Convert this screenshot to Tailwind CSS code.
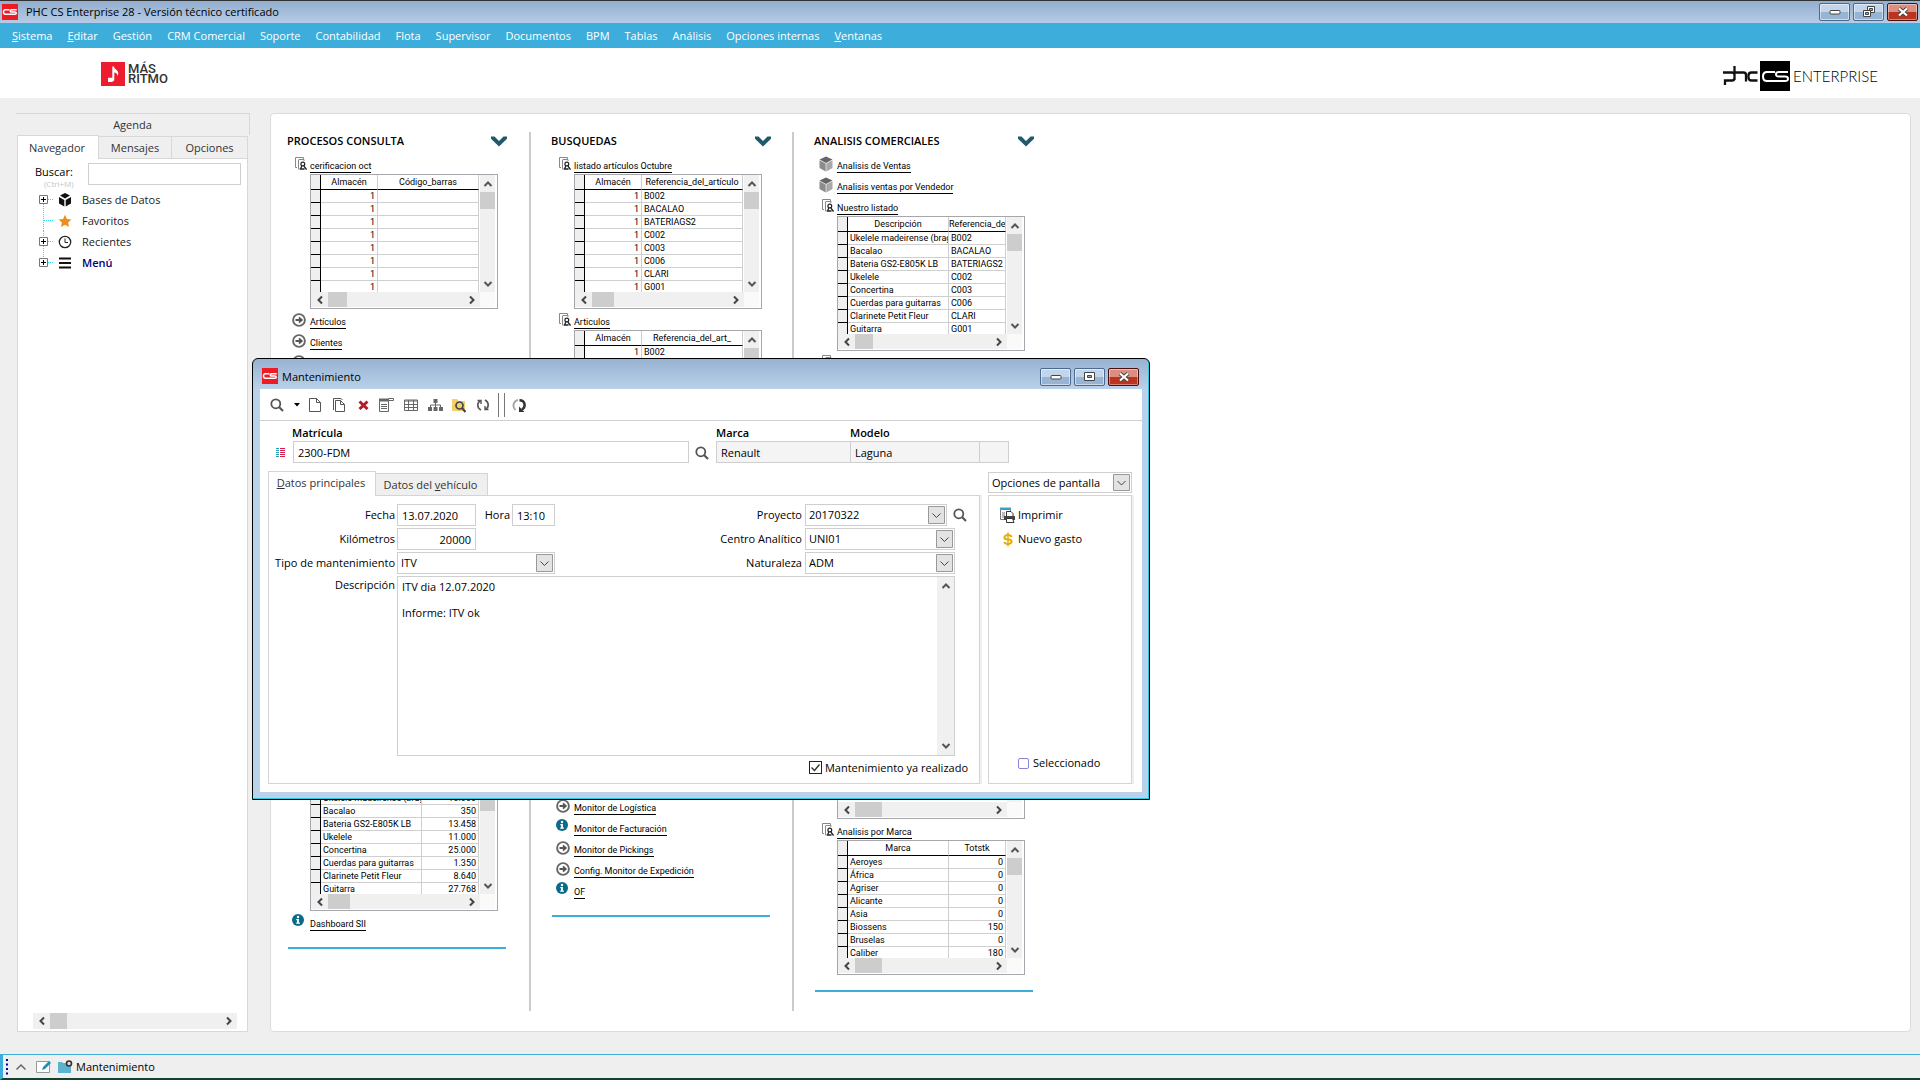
<!DOCTYPE html>
<html lang="es">
  <head>
    <meta charset="UTF-8" />
    <meta name="viewport" content="width=device-width, initial-scale=1.0" />
    <title>PHC CS Enterprise 28</title>
    <script src="https://cdn.jsdelivr.net/npm/@tailwindcss/browser@4"></script>
  </head>
  <body class="font-['Open_Sans','Noto_Sans',sans-serif] text-[11px] leading-4 text-black">
    <!-- Icon set -->
    <svg class="hidden">
      <symbol id="i-cs" viewBox="0 0 16 16">
        <rect width="16" height="16" fill="#ed1c24" />
        <path d="M7.5 5.8H3.2Q1.5 5.8 1.5 8t1.7 2.2h4.3M14.8 5.8H9.8Q8.3 5.8 8.3 7t1.5 1.1h3Q14.3 8.100 14.300 9.200t-1.500 1H6.500" fill="none" stroke="#fff" stroke-width="1.5" />
      </symbol>
      <symbol id="i-search" viewBox="0 0 14 14">
        <circle cx="5.800" cy="5.800" r="4.500" fill="none" stroke="#555" stroke-width="1.800" />
        <path d="M9 9l4 4" stroke="#555" stroke-width="2.200" />
      </symbol>
      <symbol id="i-up" viewBox="0 0 10 8">
        <path d="M1.500 6L5 2.500 8.500 6" fill="none" stroke="#555" stroke-width="2" />
      </symbol>
      <symbol id="i-down" viewBox="0 0 10 8">
        <path d="M1.500 2L5 5.500 8.500 2" fill="none" stroke="#555" stroke-width="2" />
      </symbol>
      <symbol id="i-left" viewBox="0 0 8 10">
        <path d="M6 1.500L2.500 5 6 8.500" fill="none" stroke="#444" stroke-width="2" />
      </symbol>
      <symbol id="i-right" viewBox="0 0 8 10">
        <path d="M2 1.500L5.500 5 2 8.500" fill="none" stroke="#444" stroke-width="2" />
      </symbol>
      <symbol id="i-chevron" viewBox="0 0 16 12">
        <path d="M0 1.500h3.500L8 6l4.500-4.500H16v2.300L8 11.500 0 3.800z" fill="#215968" />
      </symbol>
      <symbol id="i-list" viewBox="0 0 12 14">
        <path d="M8.500 2V.5h-8v10H2M3.500 3v9H5M3.500 2.500H9V4" fill="none" stroke="#888" />
        <circle cx="7.800" cy="7" r="1.900" fill="#fff" stroke="#222" stroke-width="1.200" />
        <path d="M5.500 12L6.800 9M5 12h4.500M8.800 8.800l2.700 3.700" fill="none" stroke="#222" stroke-width="1.300" />
      </symbol>
      <symbol id="i-go" viewBox="0 0 14 14">
        <circle cx="7" cy="7" r="5.900" fill="#fff" stroke="#666" stroke-width="1.900" />
        <path d="M3.500 7h6M7 4.300L9.800 7 7 9.700" fill="none" stroke="#555" stroke-width="1.800" />
      </symbol>
      <symbol id="i-info" viewBox="0 0 12 12">
        <circle cx="6" cy="6" r="6" fill="#0a6a8a" />
        <circle cx="6" cy="3" r="1.200" fill="#fff" />
        <path d="M4.300 5h2.600v3.600h1v1.200H4.200V8.600h.9V6.200h-.8z" fill="#fff" />
      </symbol>
      <symbol id="i-cube" viewBox="0 0 14 16">
        <path d="M7 .5L13.500 3.500 7 7 .5 3.500z" fill="#666" />
        <path d="M.5 4.300L6.700 7.600V15.500L.5 12z" fill="#8c8c8c" />
        <path d="M13.500 4.300L7.300 7.600V15.500L13.500 12z" fill="#a8a8a8" />
      </symbol>
    </svg>

    <div class="flex min-h-screen flex-col bg-[#efefef]">
      <!-- Title bar -->
      <header class="flex h-[23px] items-center border-t border-[#333] bg-linear-to-b from-[#92aecf] to-[#b6cce6] px-[2px]">
        <svg class="size-[16px]"><use href="#i-cs" /></svg>
        <h1 class="ml-2 flex-1">PHC CS Enterprise 28 - Versión técnico certificado</h1>
        <div class="flex gap-[3px]">
          <button aria-label="Minimizar" class="flex h-[18px] w-[31px] items-center justify-center rounded-[2px] border border-[#4a6a90] bg-linear-to-b from-[#c3d5ea] from-50% to-[#98b4d3] to-50% inset-ring inset-ring-white/50">
            <svg width="12" height="6"><rect x="1" y="1.500" width="10" height="3.500" rx="1" fill="#fff" stroke="#444" /></svg>
          </button>
          <button aria-label="Restaurar" class="flex h-[18px] w-[31px] items-center justify-center rounded-[2px] border border-[#4a6a90] bg-linear-to-b from-[#c3d5ea] from-50% to-[#98b4d3] to-50% inset-ring inset-ring-white/50">
            <svg width="12" height="12" fill="#fff" stroke="#444"><path d="M4.500.5h7v6h-7z" /><path d="M6.500 2.500h3v2h-3z" fill="#9ab" /><path d="M.5 4.500h7v6h-7z" /><path d="M2.500 6.500h3v2h-3z" fill="#9ab" /></svg>
          </button>
          <button aria-label="Cerrar" class="flex h-[18px] w-[31px] items-center justify-center rounded-[2px] border border-[#4a1010] bg-linear-to-b from-[#dc8f80] from-50% to-[#bb3420] to-50% inset-ring inset-ring-white/40">
            <svg width="12" height="10"><path d="M2 1.500l8 7M10 1.500l-8 7" stroke="#444" stroke-width="4" /><path d="M2 1.500l8 7M10 1.500l-8 7" stroke="#fff" stroke-width="2.200" /></svg>
          </button>
        </div>
      </header>

      <!-- Main menu -->
      <nav class="flex h-[25px] items-center gap-[15px] bg-[#3daedb] px-3 text-white">
        <a href="#"><u>S</u>istema</a>
        <a href="#"><u>E</u>ditar</a>
        <a href="#">Gestión</a>
        <a href="#">CRM Comercial</a>
        <a href="#">Soporte</a>
        <a href="#">Contabilidad</a>
        <a href="#">Flota</a>
        <a href="#">Supervisor</a>
        <a href="#">Documentos</a>
        <a href="#">BPM</a>
        <a href="#">Tablas</a>
        <a href="#">Análisis</a>
        <a href="#">Opciones internas</a>
        <a href="#"><u>V</u>entanas</a>
      </nav>

      <!-- Logos -->
      <div class="flex h-[50px] items-center justify-between bg-white pt-[2px] pr-[42px] pl-[101px]">
        <div class="flex items-center gap-[3px]">
          <svg width="24" height="24"><rect width="24" height="24" fill="#ed1c2e" /><path d="M11.300 4.500h1.600c.3 2.500 4 3.500 4.300 6.200.1 1.300-.2 2.200-.7 3-.1-2-1.600-3-3.200-3.300V17.500c0 1.600-1.300 2.500-3.300 2.500H7v-4.200h4.300z" fill="#fff" /></svg>
          <p class="font-['Roboto',sans-serif] text-[13px] leading-[10px] font-medium text-[#333]">MÁS<br />RITMO</p>
        </div>
        <div class="flex items-center gap-[2px] pt-[3px]">
          <svg width="68" height="30" fill="none">
            <path d="M0 11.500h9q2.500 0 2.500 2.500v3q0 2.500-2.500 2.500H2V24M11.500 5v14M12 11.500h8.500q2.500 0 2.500 2.500v6.500M34.500 11.500h-6q-3 0-3 3v2q0 3 3 3h6" stroke="#111" stroke-width="2.300" />
            <rect x="37" width="30" height="30" fill="#000" />
            <path d="M52 11h-8q-4 0-4 4.500t4 4.500h9M65 11H56q-3 0-3 2.300t3 2.200h6q3 0 3 2.300T62 20H50" stroke="#fff" stroke-width="2" />
          </svg>
          <span class="font-['Lato',sans-serif] text-[15px] font-light">ENTERPRISE</span>
        </div>
      </div>

      <main class="relative flex flex-1 gap-[20px] pt-[15px] pr-[9px] pb-[22px] pl-[16px]">
        <!-- Navigator -->
        <aside class="flex w-[234px] shrink-0 flex-col">
          <button class="h-[22px] border-t border-r border-[#d8d8d8] pt-px text-[#333]">Agenda</button>
          <div class="mr-[2px] ml-px flex items-end text-[#333]">
            <button class="relative z-10 -mb-px h-[24px] w-[82px] border border-b-0 border-[#d8d8d8] bg-white pr-[2px]">Navegador</button>
            <button class="h-[22px] w-[73px] border-t border-r border-[#d8d8d8]">Mensajes</button>
            <button class="h-[22px] flex-1 border-t border-r border-[#d8d8d8]">Opciones</button>
          </div>
          <div class="mr-[2px] ml-px flex flex-1 flex-col border border-[#d8d8d8] bg-white">
            <div class="flex pt-1 pr-[6px]">
              <label for="buscar" class="w-[70px] pt-px pl-[17px]">Buscar:<span class="block pl-[9px] text-[8px] leading-2 text-[#c4c4c4]">(Ctrl+M)</span></label>
              <input id="buscar" type="text" class="h-[22px] min-w-0 flex-1 border border-[#cfcfcf] bg-white px-1" />
            </div>
            <ul class="mt-px ml-[17px] font-medium text-[#222]">
              <li class="flex h-[21px] items-center">
                <svg width="21" height="21"><path d="M13 10.500h6M8.500 15v6" fill="none" stroke="#2adcf0" stroke-dasharray="1 1" /><path d="M4.500 6.500h8v8h-8z" fill="#fff" stroke="#777" /><path d="M6 10.500h5M8.500 8v5" stroke="#000" /></svg>
                <svg class="mx-[2px]" width="14" height="14"><path d="M7 0l5 2.500L7 5.500 2 2.500zM1 4l5.300 3v6.500L1 10.500zM13 4L7.700 7v6.500L13 10.500z" fill="#111" /></svg>
                <a href="#" class="ml-2">Bases de Datos</a>
              </li>
              <li class="flex h-[21px] items-center">
                <svg width="21" height="21"><path d="M8.500 0v21M9 10.500h10" fill="none" stroke="#2adcf0" stroke-dasharray="1 1" /></svg>
                <svg class="mx-[2px]" width="14" height="14"><path d="M7 .8l1.900 4.100 4.500.5-3.300 3.100.9 4.500-4-2.200L3 13l.9-4.500L.6 5.400l4.500-.5z" fill="#f08c1a" /></svg>
                <a href="#" class="ml-2">Favoritos</a>
              </li>
              <li class="flex h-[21px] items-center">
                <svg width="21" height="21"><path d="M13 10.500h6M8.500 0v6M8.500 15v6" fill="none" stroke="#2adcf0" stroke-dasharray="1 1" /><path d="M4.500 6.500h8v8h-8z" fill="#fff" stroke="#777" /><path d="M6 10.500h5M8.500 8v5" stroke="#000" /></svg>
                <svg class="mx-[2px]" width="14" height="14" fill="none" stroke="#222"><circle cx="7" cy="7" r="5.700" stroke-width="1.300" /><path d="M7 3.500V7.500h3" /></svg>
                <a href="#" class="ml-2">Recientes</a>
              </li>
              <li class="flex h-[21px] items-center">
                <svg width="21" height="21"><path d="M13 10.500h6M8.500 0v6" fill="none" stroke="#2adcf0" stroke-dasharray="1 1" /><path d="M4.500 6.500h8v8h-8z" fill="#fff" stroke="#777" /><path d="M6 10.500h5M8.500 8v5" stroke="#000" /></svg>
                <svg class="mx-[2px]" width="14" height="14"><path d="M1 2.500h12M1 7h12M1 11.500h12" stroke="#111" stroke-width="2" /></svg>
                <a href="#" class="ml-2 font-semibold text-[#000080]">Menú</a>
              </li>
            </ul>
            <div class="mt-auto mr-[10px] mb-[2px] ml-[15px] flex h-[16px] items-center bg-[#f0f0f0]">
              <button aria-label="Izquierda" class="flex w-[17px] justify-center"><svg class="h-[10px] w-[8px]"><use href="#i-left" /></svg></button>
              <span class="h-full w-[17px] bg-[#cdcdcd]"></span>
              <button aria-label="Derecha" class="ml-auto flex w-[17px] justify-center"><svg class="h-[10px] w-[8px]"><use href="#i-right" /></svg></button>
            </div>
          </div>
        </aside>

        <!-- Dashboard columns, filled by the script below -->
        <div id="board" class="flex flex-1 rounded-sm border border-[#dcdcdc] bg-white pt-[18px] pb-5"></div>
      </main>

      <!-- Window list -->
      <footer class="flex h-[26px] items-center border-t border-b-2 border-l-[3px] border-t-[#3daedb] border-b-[#16402e] border-l-[#3daedb] pl-[3px]">
        <svg width="3" height="16"><path d="M1 0v16" stroke="#0000a8" stroke-width="2" stroke-dasharray="2 2.500" /></svg>
        <button aria-label="Expandir" class="ml-[6px]"><svg width="12" height="8"><path d="M1.500 6.500L6 2l4.500 4.500" fill="none" stroke="#666" stroke-width="1.500" /></svg></button>
        <button aria-label="Editar" class="ml-[9px]"><svg width="16" height="14"><path d="M.5 1.500h13v11H.5z" fill="#fff" stroke="#999" /><path d="M6 10l1-3 6-6 2 2-6 6z" fill="#1f93b0" /></svg></button>
        <button class="ml-[6px] flex items-center gap-[2px]">
          <svg width="16" height="14"><path d="M0 2h4l1 1h8v10H0z" fill="#5cb3d0" /><circle cx="11" cy="3.500" r="2.500" fill="#ddd" stroke="#333" stroke-width="1.600" /></svg>
          Mantenimiento
        </button>
      </footer>
    </div>

    <!-- Maintenance window -->
    <section class="absolute top-[358px] left-[252px] w-[898px] rounded-t-md border border-black bg-[#b9d1ea] bg-linear-to-b from-[#98b2d1] to-[#b9d1ea] to-[30px] px-[7px] pb-[7px] shadow-[inset_-1px_-1px_0_#2bc8e0]">
      <header class="flex h-[30px] items-start pt-[9px]">
        <svg class="ml-[2px] size-[16px]"><use href="#i-cs" /></svg>
        <h2 class="ml-1 flex-1 pt-px">Mantenimiento</h2>
        <div class="mr-[3px] flex gap-[3px]">
          <button aria-label="Minimizar" class="flex h-[18px] w-[31px] items-center justify-center rounded-[2px] border border-[#4a6a90] bg-linear-to-b from-[#c3d5ea] from-50% to-[#98b4d3] to-50% inset-ring inset-ring-white/50">
            <svg width="12" height="6"><rect x="1" y="1.500" width="10" height="3.500" rx="1" fill="#fff" stroke="#444" /></svg>
          </button>
          <button aria-label="Maximizar" class="flex h-[18px] w-[31px] items-center justify-center rounded-[2px] border border-[#4a6a90] bg-linear-to-b from-[#c3d5ea] from-50% to-[#98b4d3] to-50% inset-ring inset-ring-white/50">
            <svg width="12" height="10" fill="#fff" stroke="#444"><path d="M.5.5h10v8H.5z" /><path d="M3.500 3.500h4v2h-4z" fill="#9ab" /></svg>
          </button>
          <button aria-label="Cerrar" class="flex h-[18px] w-[31px] items-center justify-center rounded-[2px] border border-[#4a1010] bg-linear-to-b from-[#dc8f80] from-50% to-[#bb3420] to-50% inset-ring inset-ring-white/40">
            <svg width="12" height="10"><path d="M2 1.500l8 7M10 1.500l-8 7" stroke="#444" stroke-width="4" /><path d="M2 1.500l8 7M10 1.500l-8 7" stroke="#fff" stroke-width="2.200" /></svg>
          </button>
        </div>
      </header>

      <div class="bg-white">
        <!-- Toolbar -->
        <div class="flex h-[32px] items-center border-b border-[#d0d0d0] pt-px pl-[10px]">
          <button aria-label="Buscar"><svg class="size-[14px]"><use href="#i-search" /></svg></button>
          <button aria-label="Más" class="ml-[10px]"><svg width="6" height="4"><path d="M0 0h6L3 3.500z" /></svg></button>
          <button aria-label="Nuevo" class="ml-2"><svg width="14" height="16" fill="none" stroke="#555"><path d="M1.500 1.500h7l4 4v9h-11zM8.500 1.500v4h4" /></svg></button>
          <button aria-label="Duplicar" class="ml-[10px]"><svg width="14" height="16" fill="none" stroke="#555"><path d="M3.500 3.500h5l4 4v7h-9zM8.500 3.500v4h4M1.500 13V1.500H9l1.500 1.500" /></svg></button>
          <button aria-label="Eliminar" class="ml-3"><svg width="11" height="10"><path d="M1.500 1.500l8 7.500M9.500 1.500l-8 7.500" stroke="#b01e2a" stroke-width="3" /></svg></button>
          <button aria-label="Lista" class="ml-[9px]"><svg width="17" height="16" fill="none" stroke="#666"><path d="M1.500 3.500h9v11h-9z" /><path d="M1 3h9" stroke-width="3" /><path d="M3 7.500h6M3 9.500h6M3 11.500h6" /><path d="M10.500 1.500h5v2h-5z" /></svg></button>
          <button aria-label="Tabla" class="ml-[9px]"><svg width="14" height="12" fill="none" stroke="#666"><path d="M.5 1h13v10.500H.5zM.5 2h13M.5 5.500h13M.5 8.500h13M4.500 1v10M9.500 1v10" /></svg></button>
          <button aria-label="Jerarquía" class="ml-[10px]"><svg width="15" height="14"><path d="M5.500 1h4v4h-4zM0 9h4v4H0zM5.500 9h4v4h-4zM11 9h4v4h-4z" fill="#666" /><path d="M7.500 5v4M2.500 9V7h10v2" fill="none" stroke="#666" /></svg></button>
          <button aria-label="Explorar" class="ml-[9px]"><svg width="15" height="15"><path d="M0 1h5l1.500 2H13v10H0z" fill="#f3cf6b" /><circle cx="7.500" cy="7.500" r="3.500" fill="none" stroke="#444" stroke-width="1.700" /><path d="M10 10l3.500 4" stroke="#444" stroke-width="2" /></svg></button>
          <button aria-label="Actualizar" class="ml-[9px]"><svg width="14" height="14" fill="none" stroke="#555" stroke-width="1.600"><path d="M5 12C.8 10 .8 4.500 4.500 3M9 2c4.200 2 4.200 7.500.5 9" /><path d="M1.500 2.500H5V6M12.500 11.500H9V8" stroke-width="1.400" /></svg></button>
          <span class="ml-[8px] h-[24px] w-[7px] border-x border-[#777]"></span>
          <button aria-label="Repetir" class="ml-[7px]"><svg width="14" height="15" fill="none"><path d="M6 2C.5 3.500.5 9.500 3.500 12" stroke="#aaa" stroke-width="2" /><path d="M7.500 2.200c6 0 6.500 7 2.500 9.300" stroke="#333" stroke-width="2.500" /><path d="M7 8.500V14h5.500z" fill="#333" /></svg></button>
        </div>

        <!-- Vehicle -->
        <div class="flex items-end pt-1">
          <button aria-label="Detalle" class="mb-[5px] ml-4 w-[17px]"><svg width="10" height="10" fill="none" stroke-width="1"><path d="M0 .5h3M0 2.500h3M0 4.500h3M0 6.500h3M0 8.500h3" stroke="#2a9db5" /><path d="M4 .5h5M4 2.500h5M4 4.500h5M4 6.500h5M4 8.500h5" stroke="#d02048" /></svg></button>
          <div class="flex w-[396px] flex-col">
            <label for="matricula" class="-ml-px font-semibold">Matrícula</label>
            <input id="matricula" type="text" value="2300-FDM" class="h-[22px] border border-[#cfcfcf] px-1" />
          </div>
          <button aria-label="Buscar matrícula" class="mb-[3px] ml-[6px] w-[21px]"><svg class="size-[14px]"><use href="#i-search" /></svg></button>
          <div class="flex w-[134px] flex-col">
            <label for="marca" class="font-semibold">Marca</label>
            <input id="marca" type="text" value="Renault" readonly class="h-[22px] border border-r-0 border-[#cfcfcf] bg-[#f4f4f4] px-1" />
          </div>
          <div class="flex w-[130px] flex-col">
            <label for="modelo" class="font-semibold">Modelo</label>
            <input id="modelo" type="text" value="Laguna" readonly class="h-[22px] border border-[#cfcfcf] bg-[#f4f4f4] px-1" />
          </div>
          <input aria-label="Variante" type="text" readonly class="h-[22px] w-[29px] border border-l-0 border-[#cfcfcf] bg-[#f4f4f4]" />
        </div>

        <div class="mt-2 flex gap-[8px] pr-[10px] pb-2 pl-2">
          <div class="flex flex-1 flex-col">
            <div class="flex items-end text-[#333]">
              <button class="relative z-10 -mb-px h-[25px] w-[108px] border border-b-0 border-[#d4d4d4] bg-white pr-[2px] pb-[2px]"><u>D</u>atos principales</button>
              <button class="h-[22px] w-[112px] border border-b-0 border-l-0 border-[#d4d4d4] bg-[#efefef] pr-[2px]">Datos del <u>v</u>ehículo</button>
            </div>
            <form class="flex-1 border border-[#d4d4d4] shadow-[2px_0_0_#efefef]">
              <div class="flex pt-2">
                <div class="flex flex-col gap-[2px]">
                  <div class="flex items-center">
                    <label for="fecha" class="w-[128px] pr-[2px] text-right">Fecha</label>
                    <input id="fecha" type="text" value="13.07.2020" class="h-[22px] w-[79px] border border-[#cfcfcf] px-1" />
                    <label for="hora" class="w-[36px] pr-[2px] text-right">Hora</label>
                    <input id="hora" type="text" value="13:10" class="h-[22px] w-[43px] border border-[#cfcfcf] px-1" />
                  </div>
                  <div class="flex items-center">
                    <label for="km" class="w-[128px] pr-[2px] text-right">Kilómetros</label>
                    <input id="km" type="text" value="20000" class="h-[22px] w-[79px] border border-[#cfcfcf] px-1 text-right" />
                  </div>
                  <div class="flex items-center">
                    <label for="tipo" class="w-[128px] pr-[2px] text-right">Tipo de mantenimiento</label>
                    <div class="relative">
                      <select id="tipo" class="h-[22px] w-[158px] appearance-none border border-[#cfcfcf] bg-white px-[3px]"><option>ITV</option></select>
                      <svg class="pointer-events-none absolute top-[2px] right-[2px]" width="17" height="18"><path d="M.5.5h16v17H.5z" fill="#e3e3e3" stroke="#999" /><path d="M4.500 7.500l4 4 4-4" fill="none" stroke="#444" /></svg>
                    </div>
                  </div>
                </div>
                <div class="mr-[9px] ml-auto flex w-[278px] flex-col gap-[2px]">
                  <div class="flex items-center">
                    <label for="proyecto" class="w-[113px] pr-[3px] text-right">Proyecto</label>
                    <div class="relative">
                      <select id="proyecto" class="h-[22px] w-[142px] appearance-none border border-[#cfcfcf] bg-white px-[3px]"><option>20170322</option></select>
                      <svg class="pointer-events-none absolute top-[2px] right-[2px]" width="17" height="18"><path d="M.5.5h16v17H.5z" fill="#e3e3e3" stroke="#999" /><path d="M4.500 7.500l4 4 4-4" fill="none" stroke="#444" /></svg>
                    </div>
                    <button type="button" aria-label="Buscar proyecto" class="ml-[6px]"><svg class="size-[14px]"><use href="#i-search" /></svg></button>
                  </div>
                  <div class="flex items-center">
                    <label for="centro" class="w-[113px] pr-[3px] text-right">Centro Analítico</label>
                    <div class="relative">
                      <select id="centro" class="h-[22px] w-[150px] appearance-none border border-[#cfcfcf] bg-white px-[3px]"><option>UNI01</option></select>
                      <svg class="pointer-events-none absolute top-[2px] right-[2px]" width="17" height="18"><path d="M.5.5h16v17H.5z" fill="#e3e3e3" stroke="#999" /><path d="M4.500 7.500l4 4 4-4" fill="none" stroke="#444" /></svg>
                    </div>
                  </div>
                  <div class="flex items-center">
                    <label for="naturaleza" class="w-[113px] pr-[3px] text-right">Naturaleza</label>
                    <div class="relative">
                      <select id="naturaleza" class="h-[22px] w-[150px] appearance-none border border-[#cfcfcf] bg-white px-[3px]"><option>ADM</option></select>
                      <svg class="pointer-events-none absolute top-[2px] right-[2px]" width="17" height="18"><path d="M.5.5h16v17H.5z" fill="#e3e3e3" stroke="#999" /><path d="M4.500 7.500l4 4 4-4" fill="none" stroke="#444" /></svg>
                    </div>
                  </div>
                </div>
              </div>
              <div class="mt-[2px] flex">
                <label for="descripcion" class="w-[128px] pt-px pr-[2px] text-right">Descripción</label>
                <div class="flex h-[180px] w-[558px] border border-[#cfcfcf]">
                  <textarea id="descripcion" class="flex-1 resize-none overflow-hidden px-1 pt-[3px] leading-[13px]">ITV dia 12.07.2020

Informe: ITV ok</textarea>
                  <div class="flex w-[17px] flex-col items-center justify-between bg-[#f0f0f0] py-[5px]">
                    <button type="button" aria-label="Subir"><svg class="h-[8px] w-[10px]"><use href="#i-up" /></svg></button>
                    <button type="button" aria-label="Bajar"><svg class="h-[8px] w-[10px]"><use href="#i-down" /></svg></button>
                  </div>
                </div>
              </div>
              <div class="flex h-[27px] items-center justify-end pr-[11px] pb-1">
                <span class="relative mr-[3px] size-[13px]">
                  <input id="realizado" type="checkbox" checked class="block size-[13px] appearance-none border border-[#222] bg-white" />
                  <svg class="pointer-events-none absolute inset-0" width="13" height="13"><path d="M2.500 6.500l3 3 5-6" fill="none" stroke="#333" stroke-width="1.400" /></svg>
                </span>
                <label for="realizado">Mantenimiento ya realizado</label>
              </div>
            </form>
          </div>

          <div class="flex w-[144px] flex-col pt-px">
            <div class="relative">
              <select aria-label="Opciones de pantalla" class="h-[21px] w-full appearance-none border border-[#cfcfcf] bg-white px-[3px]"><option>Opciones de pantalla</option></select>
              <svg class="pointer-events-none absolute top-[2px] right-[2px]" width="17" height="17"><path d="M.5.5h16v16H.5z" fill="#e3e3e3" stroke="#999" /><path d="M4.500 7l4 4 4-4" fill="none" stroke="#444" /></svg>
            </div>
            <div class="mt-[2px] flex flex-1 flex-col border border-[#d4d4d4] pt-[7px] shadow-[2px_0_0_#efefef]">
              <button class="ml-[10px] flex h-6 items-center gap-[2px]">
                <svg width="17" height="16"><path d="M1.500 2.500h10v10h-10z" fill="#fff" stroke="#777" /><path d="M1 1.500h11" stroke="#3aa5cc" stroke-width="2" /><path d="M3 6h3M3 8h3M3 10h3" stroke="#777" /><path d="M7.500 9V4.500H12l2 2V9" fill="#fff" stroke="#333" /><path d="M5 9h11v4H5z" fill="#444" /><path d="M7.500 11.500h6l1.500 4H7.500z" fill="#fff" stroke="#333" /></svg>
                Imprimir
              </button>
              <button class="ml-[14px] flex h-6 items-center gap-[5px]">
                <svg width="10" height="15" fill="none" stroke="#e5ae12" stroke-width="2.200"><path d="M8.500 5Q8 3 5 3T1.500 5.200 5 7.500t3.500 2.300T5 12 1.300 10" /><path d="M5 .5v14" stroke-width="1.500" /></svg>
                Nuevo gasto
              </button>
              <div class="mt-auto mb-3 ml-[29px] flex items-center gap-1">
                <input id="seleccionado" type="checkbox" class="size-[11px] appearance-none rounded-[2px] border border-[#8b83d6] bg-white" />
                <label for="seleccionado">Seleccionado</label>
              </div>
            </div>
          </div>
        </div>
      </div>
    </section>

    <script>
      const refs = ["B002", "BACALAO", "BATERIAGS2", "C002", "C003", "C006", "CLARI", "G001"];
      const names = [
        "Ukelele madeirense (braguinha)", "Bacalao", "Bateria GS2-E805K LB", "Ukelele",
        "Concertina", "Cuerdas para guitarras", "Clarinete Petit Fleur", "Guitarra",
      ];
      const zip = (a, b) => a.map((v, i) => [v, b[i]]);
      const ones = refs.map(() => "1");

      // link: [icon, text], grid: {head, rows, widths, align, thumb}, gap: free space in px
      const columns = [
        {
          title: "PROCESOS CONSULTA",
          items: [
            { link: ["list", "cerificacion oct"] },
            { grid: { head: ["Almacén", "Código_barras"], rows: zip(ones, refs.map(() => "")), widths: [57, 101], align: "rl", thumb: 19 } },
            { link: ["go", "Artículos"] },
            { link: ["go", "Clientes"] },
            { link: ["go", "Proveedores"] },
            { gap: 404 },
            { grid: { head: ["Descripción", "Total"], rows: zip(names, ["10.000", "350", "13.458", "11.000", "25.000", "1.350", "8.640", "27.768"]), widths: [101, 57], align: "lr", thumb: 22 } },
            { link: ["info", "Dashboard SII"] },
          ],
        },
        {
          title: "BUSQUEDAS",
          items: [
            { link: ["list", "listado artículos Octubre"] },
            { grid: { head: ["Almacén", "Referencia_del_artículo"], rows: zip(ones, refs), widths: [57, 101], align: "rl", thumb: 22 } },
            { link: ["list", "Articulos"] },
            { grid: { head: ["Almacén", "Referencia_del_art_"], rows: zip(ones, refs), widths: [57, 101], align: "rl", thumb: 22 } },
            { gap: 330 },
            { link: ["go", "Monitor de Logística"] },
            { link: ["info", "Monitor de Facturación"] },
            { link: ["go", "Monitor de Pickings"] },
            { link: ["go", "Config. Monitor de Expedición"] },
            { link: ["info", "OF"] },
          ],
        },
        {
          title: "ANALISIS COMERCIALES",
          items: [
            { link: ["cube", "Analisis de Ventas"] },
            { link: ["cube", "Analisis ventas por Vendedor"] },
            { link: ["list", "Nuestro listado"] },
            { grid: { head: ["Descripción", "Referencia_del_artículo"], rows: zip(names, refs), widths: [101, 57], align: "ll", thumb: 18 } },
            { link: ["list", "Ventas"] },
            { gap: 312 },
            { grid: { head: ["Marca", "Totstk"], rows: [], widths: [101, 57], align: "lr", thumb: 27 } },
            { link: ["list", "Analisis por Marca"] },
            { grid: { head: ["Marca", "Totstk"], rows: zip(["Aeroyes", "África", "Agriser", "Alicante", "Asia", "Biossens", "Bruselas", "Caliber"], ["0", "0", "0", "0", "0", "150", "0", "180"]), widths: [101, 57], align: "lr", thumb: 27 } },
          ],
        },
      ];

      const iconClass = {
        list: "ml-[3px] h-[14px] w-[12px]",
        go: "h-[14px] w-[14px]",
        info: "mb-[3px] h-[12px] w-[12px]",
        cube: "h-[16px] w-[14px]",
      };

      const linkHtml = ([icon, text]) => `
        <div class="flex h-[21px] items-end pb-px">
          <span class="flex h-[19px] w-[18px] shrink-0 items-center"><svg class="${iconClass[icon]}"><use href="#i-${icon}" /></svg></span>
          <a href="#" class="border-b border-black leading-[11px] whitespace-nowrap">${text}</a>
        </div>`;

      const cell = (text, right) =>
        `<td class="truncate border-r border-b border-[#cfcfcf] px-[2px] pt-px text-clip ${right ? "text-right" : "text-left"}">${text}</td>`;

      const headCell = (text, width) => {
        // a title wider than its column is cut at the right, not on both sides
        const fit = text.length * 5 < width + 20 ? "text-center" : "text-left";
        return `<th style="width:${width}px" class="overflow-hidden border-r border-b border-r-[#cfcfcf] border-b-black pt-px font-normal whitespace-nowrap ${fit}">${text}</th>`;
      };

      const gridHtml = (g) => `
        <div class="ml-[18px] flex h-[135px] w-[188px] flex-col border border-[#a5a7ad] text-left">
          <div class="flex h-[117px] overflow-hidden">
            <table class="h-fit w-[168px] table-fixed border-separate border-spacing-0 leading-[11px]">
              <thead>
                <tr class="h-[15px]">
                  <th class="w-[10px] border-r border-b border-r-black border-b-black bg-[#efefef]"></th>
                  ${g.head.map((h, i) => headCell(h, g.widths[i])).join("")}
                </tr>
              </thead>
              <tbody>
                ${g.rows.map((r) => `<tr class="h-[13px]"><td class="border-r border-b border-black bg-[#efefef]"></td>${cell(r[0], g.align[0] === "r")}${cell(r[1], g.align[1] === "r")}</tr>`).join("")}
              </tbody>
            </table>
            <div class="ml-px flex w-[15px] flex-col items-center bg-[#f0f0f0]">
              <button aria-label="Subir" class="flex h-[17px] items-center"><svg class="h-[8px] w-[10px]"><use href="#i-up" /></svg></button>
              <span class="h-[17px] w-[15px] bg-[#cdcdcd]"></span>
              <button aria-label="Bajar" class="mt-auto flex h-[16px] items-center"><svg class="h-[8px] w-[10px]"><use href="#i-down" /></svg></button>
            </div>
          </div>
          <div class="mr-[2px] flex h-[15px] items-center bg-[#f0f0f0]">
            <button aria-label="Izquierda" class="flex w-[17px] justify-center"><svg class="h-[10px] w-[8px]"><use href="#i-left" /></svg></button>
            <span style="width:${g.thumb}px" class="h-[15px] bg-[#cdcdcd]"></span>
            <button aria-label="Derecha" class="ml-auto flex w-[17px] justify-center"><svg class="h-[10px] w-[8px]"><use href="#i-right" /></svg></button>
            <span class="h-full w-[15px] bg-[#fafafa]"></span>
          </div>
        </div>`;

      const itemHtml = (it) =>
        it.link ? linkHtml(it.link) : it.grid ? gridHtml(it.grid) : `<div style="height:${it.gap}px"></div>`;

      const edge = [
        "w-[258px] shrink-0 pl-4",
        "w-[263px] shrink-0 border-l-2 border-[#cbcbcb] pl-5",
        "w-[263px] shrink-0 border-l-2 border-[#cbcbcb] pl-5",
      ];

      document.getElementById("board").innerHTML = columns
        .map((c, i) => `
          <section class="${edge[i]}">
            <div class="flex h-[21px] w-[220px] items-center justify-between pb-[3px]">
              <h2 class="font-semibold">${c.title}</h2>
              <button aria-label="Plegar"><svg class="h-[12px] w-[16px]"><use href="#i-chevron" /></svg></button>
            </div>
            <div class="pl-[5px] font-['Roboto',sans-serif] text-[9px]">${c.items.map(itemHtml).join("")}</div>
            <div class="mt-[15px] ml-px h-[2px] w-[218px] bg-[#3daedb]"></div>
          </section>`)
        .join("");
    </script>
  </body>
</html>
